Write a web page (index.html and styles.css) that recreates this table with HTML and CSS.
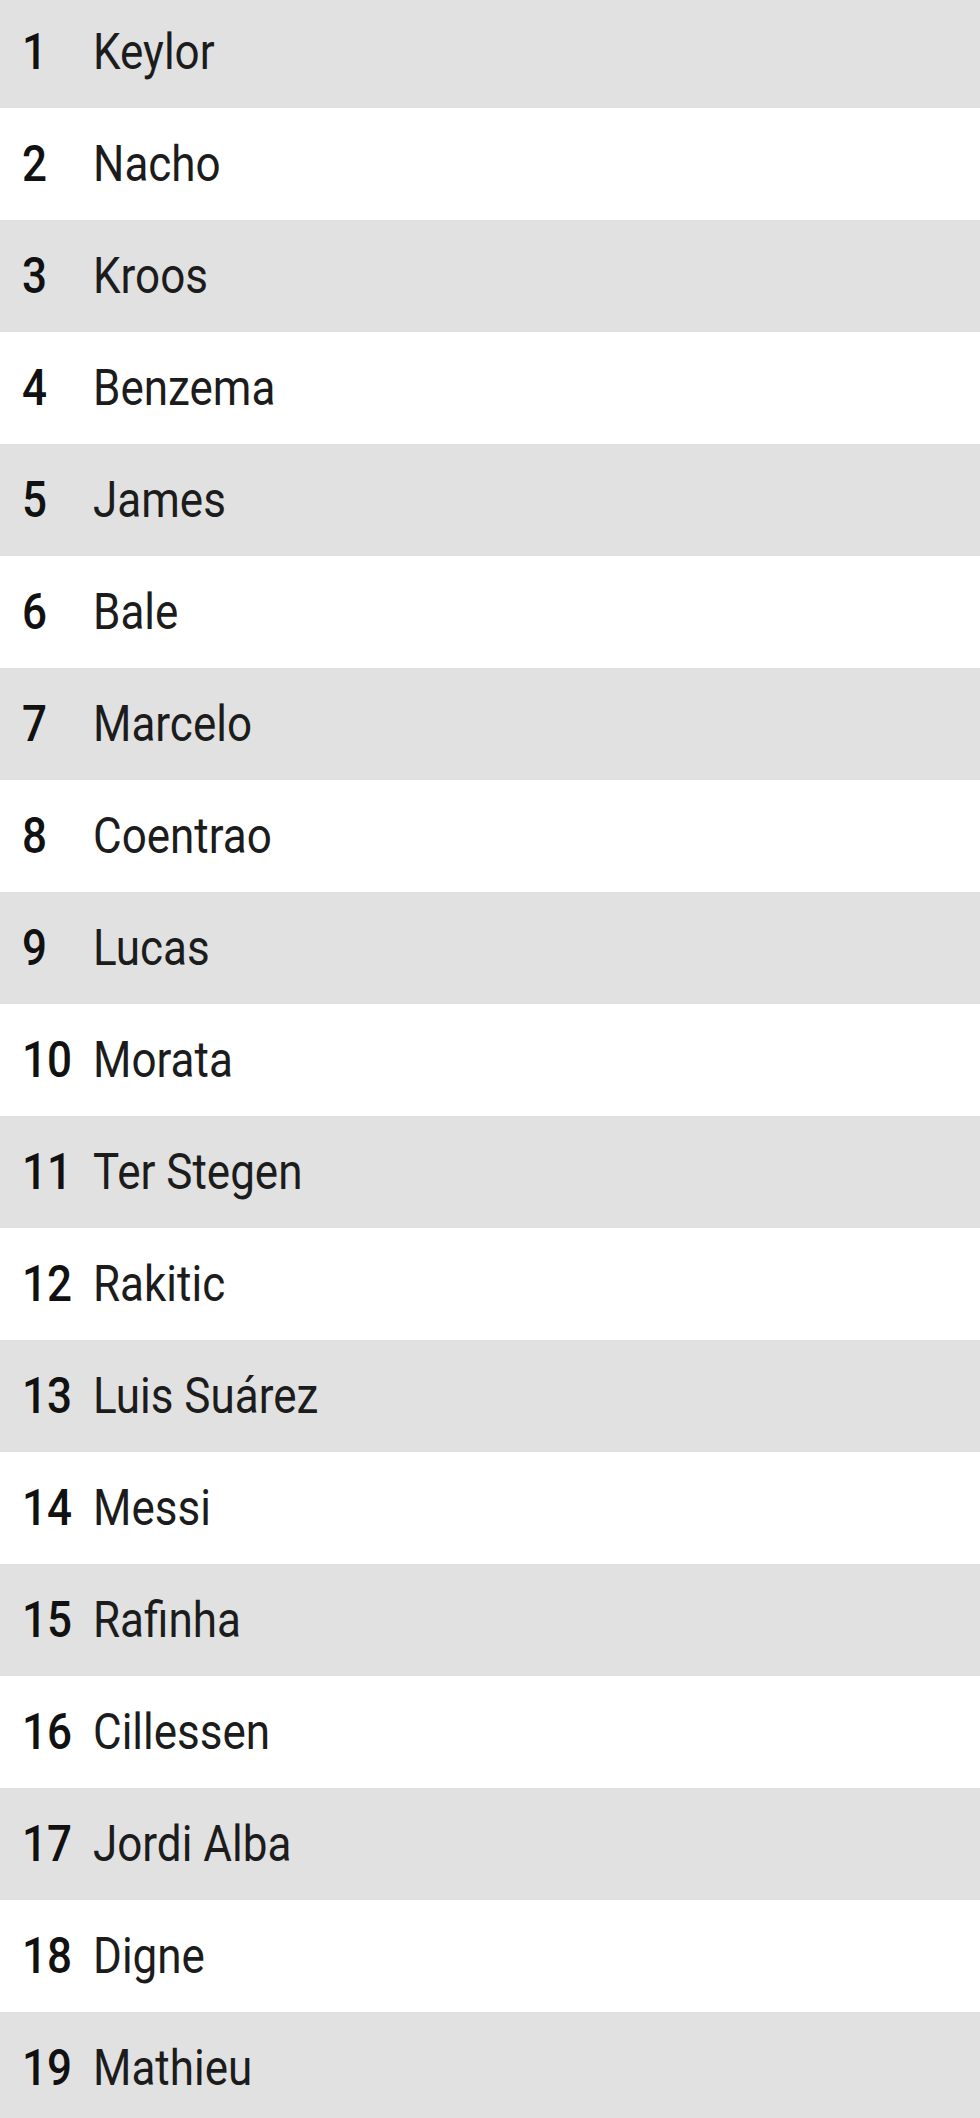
FILE: index.html
```html
<!DOCTYPE html>
<html>
<head>
<meta charset="utf-8">
<link rel="stylesheet" href="styles.css">
</head>
<body>
<ul class="list">
  <li class="row"><span class="num">1</span><span class="name">Keylor</span></li>
  <li class="row"><span class="num">2</span><span class="name">Nacho</span></li>
  <li class="row"><span class="num">3</span><span class="name">Kroos</span></li>
  <li class="row"><span class="num">4</span><span class="name">Benzema</span></li>
  <li class="row"><span class="num">5</span><span class="name">James</span></li>
  <li class="row"><span class="num">6</span><span class="name">Bale</span></li>
  <li class="row"><span class="num">7</span><span class="name">Marcelo</span></li>
  <li class="row"><span class="num">8</span><span class="name">Coentrao</span></li>
  <li class="row"><span class="num">9</span><span class="name">Lucas</span></li>
  <li class="row"><span class="num">10</span><span class="name">Morata</span></li>
  <li class="row"><span class="num">11</span><span class="name">Ter Stegen</span></li>
  <li class="row"><span class="num">12</span><span class="name">Rakitic</span></li>
  <li class="row"><span class="num">13</span><span class="name">Luis Suárez</span></li>
  <li class="row"><span class="num">14</span><span class="name">Messi</span></li>
  <li class="row"><span class="num">15</span><span class="name">Rafinha</span></li>
  <li class="row"><span class="num">16</span><span class="name">Cillessen</span></li>
  <li class="row"><span class="num">17</span><span class="name">Jordi Alba</span></li>
  <li class="row"><span class="num">18</span><span class="name">Digne</span></li>
  <li class="row"><span class="num">19</span><span class="name">Mathieu</span></li>
</ul>
</body>
</html>
```
FILE: styles.css
```css
html, body {
  margin: 0;
  padding: 0;
  background: #ffffff;
  overflow: hidden;
}
.list {
  list-style: none;
  margin: 0;
  padding: 0;
  font-family: Roboto, "Liberation Sans", sans-serif;
  color: #1c1c1c;
}
.row {
  display: flex;
  align-items: center;
  height: 112px;
  padding-left: 22px;
  font-size: 44px;
  line-height: 1;
}
.row:first-child {
  height: 108px;
}
.row:nth-child(odd) {
  background: #e1e1e1;
}
.row:first-child .num,
.row:first-child .name {
  position: relative;
  top: -2px;
}
.num {
  width: 71px;
  font-weight: 500;
  color: #111111;
  transform: scaleY(1.13);
  transform-origin: center;
}
.name {
  font-weight: 400;
  transform: scaleY(1.13);
  transform-origin: center;
}
```
